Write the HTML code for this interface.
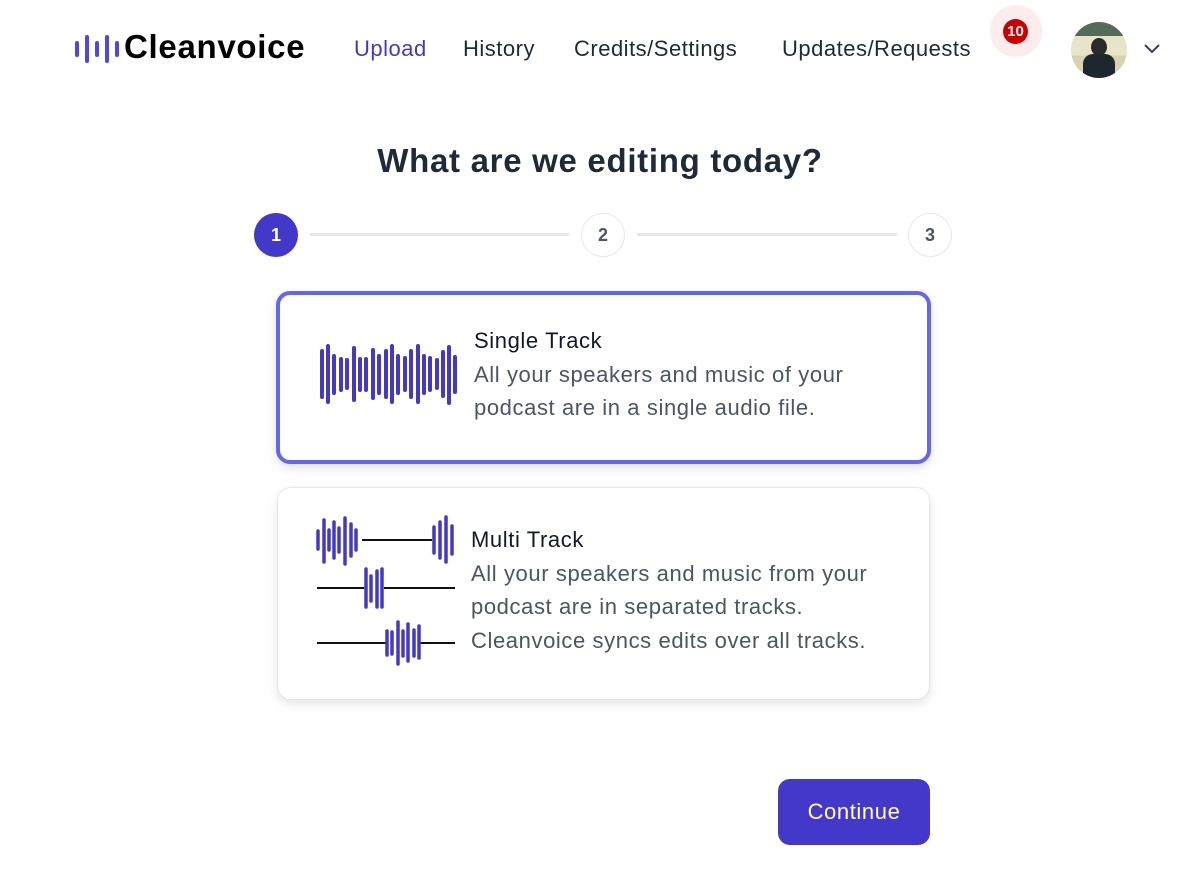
<!DOCTYPE html>
<html><head><meta charset="utf-8"><style>
*{box-sizing:border-box;margin:0;padding:0}
body{width:1200px;height:880px;background:#fff;font-family:"Liberation Sans",sans-serif;position:relative;overflow:hidden;color:#111827}
.abs{position:absolute}
.nav a{position:absolute;top:36px;font-size:22px;letter-spacing:0.5px;color:#1f2937;text-decoration:none;white-space:nowrap}
.circ{position:absolute;width:44px;height:44px;border-radius:50%;top:213px;font-size:18px;font-weight:bold;display:flex;align-items:center;justify-content:center}
.card{position:absolute;background:#fff;border-radius:14px}
.t{position:absolute;font-size:22px;letter-spacing:0.6px;line-height:33.5px;color:#4b5563;white-space:nowrap}
.t b{font-weight:normal;color:#111827;display:block}
</style></head><body>
<svg class="abs" style="left:74px;top:34px" width="46" height="30"><g stroke="#4f46e5" stroke-width="4" stroke-linecap="round"><line x1="3" y1="9" x2="3" y2="21"/><line x1="13" y1="3" x2="13" y2="27"/><line x1="23" y1="9" x2="23" y2="21"/><line x1="33" y1="3" x2="33" y2="27"/><line x1="43" y1="9" x2="43" y2="21"/></g></svg>
<div class="abs" style="left:124px;top:28px;font-size:33px;font-weight:bold;color:#000;letter-spacing:0.7px">Cleanvoice</div>
<div class="nav">
<a style="left:354px;color:#4338ca">Upload</a>
<a style="left:463px">History</a>
<a style="left:574px">Credits/Settings</a>
<a style="left:782px">Updates/Requests</a>
</div>
<div class="abs" style="left:990px;top:5px;width:52px;height:52px;border-radius:50%;background:#fdecec"></div>
<div class="abs" style="left:1003px;top:19px;width:25px;height:25px;border-radius:50%;background:#c00;color:#fff;font-size:15px;font-weight:bold;display:flex;align-items:center;justify-content:center">10</div>
<div class="abs" style="left:1071px;top:22px;width:56px;height:56px;border-radius:50%;background:linear-gradient(180deg,#556b5a 0 25%,#e8e4c8 25% 60%,#d8d2b0 60%);overflow:hidden"><div style="position:absolute;left:20px;top:16px;width:16px;height:18px;border-radius:50%;background:#2a2a2a"></div><div style="position:absolute;left:12px;top:32px;width:32px;height:26px;border-radius:10px 10px 0 0;background:#1e2630"></div></div>
<svg class="abs" style="left:1143px;top:43px" width="18" height="12"><path d="M2 2 L9 9 L16 2" fill="none" stroke="#374151" stroke-width="2"/></svg>
<div class="abs" style="left:0;width:1200px;top:142px;text-align:center;font-size:33px;font-weight:bold;letter-spacing:0.7px;color:#1f2937">What are we editing today?</div>
<div class="abs" style="left:310px;top:233px;width:259px;height:3px;background:#e5e7eb"></div>
<div class="abs" style="left:637px;top:233px;width:260px;height:3px;background:#e5e7eb"></div>
<div class="circ" style="left:254px;background:#4338ca;color:#fff">1</div>
<div class="circ" style="left:581px;border:1.5px solid #e5e7eb;color:#4b5563">2</div>
<div class="circ" style="left:908px;border:1.5px solid #e5e7eb;color:#4b5563">3</div>
<div class="card" style="left:276px;top:291px;width:655px;height:173px;border:4px solid #6366f1;box-shadow:0 4px 10px rgba(0,0,0,.12)"></div>
<div class="t" style="left:474px;top:324px"><b>Single Track</b>All your speakers and music of your<br>podcast are in a single audio file.</div>
<div class="card" style="left:277px;top:487px;width:653px;height:213px;border:1px solid #e5e7eb;box-shadow:0 4px 10px rgba(0,0,0,.10)"></div>
<svg class="abs" style="left:0;top:0" width="1200" height="880">
<g stroke="#111" stroke-width="2"><line x1="362" y1="540" x2="432" y2="540"/><line x1="317" y1="588" x2="364" y2="588"/><line x1="384" y1="588" x2="455" y2="588"/><line x1="317" y1="643" x2="386" y2="643"/><line x1="420" y1="643" x2="455" y2="643"/></g>
<g stroke="#4338ca" stroke-width="3.5" stroke-linecap="round">
<line x1="318" y1="531" x2="318" y2="549"/><line x1="324" y1="520" x2="324" y2="562"/><line x1="329" y1="530" x2="329" y2="550"/><line x1="334" y1="522" x2="334" y2="558"/><line x1="339" y1="528" x2="339" y2="552"/><line x1="345" y1="518" x2="345" y2="564"/><line x1="351" y1="524" x2="351" y2="556"/><line x1="356" y1="530" x2="356" y2="550"/>
<line x1="434" y1="527" x2="434" y2="553"/><line x1="440" y1="522" x2="440" y2="558"/><line x1="446" y1="517" x2="446" y2="562"/><line x1="452" y1="526" x2="452" y2="554"/>
<line x1="366" y1="569" x2="366" y2="607"/><line x1="371" y1="576" x2="371" y2="601"/><line x1="377" y1="571" x2="377" y2="607"/><line x1="382" y1="569" x2="382" y2="607"/>
<line x1="387" y1="631" x2="387" y2="655"/><line x1="392" y1="632" x2="392" y2="654"/><line x1="398" y1="622" x2="398" y2="664"/><line x1="403" y1="631" x2="403" y2="656"/><line x1="408" y1="624" x2="408" y2="661"/><line x1="414" y1="630" x2="414" y2="656"/><line x1="419" y1="626" x2="419" y2="658"/>
</g>
<g stroke="#4338ca" stroke-width="4" stroke-linecap="round">
<line x1="322" y1="351" x2="322" y2="397"/><line x1="328" y1="346" x2="328" y2="402"/><line x1="334" y1="356" x2="334" y2="393"/><line x1="341" y1="359" x2="341" y2="390"/><line x1="347" y1="360" x2="347" y2="388"/><line x1="354" y1="348" x2="354" y2="400"/><line x1="360" y1="359" x2="360" y2="390"/><line x1="366" y1="359" x2="366" y2="390"/><line x1="373" y1="350" x2="373" y2="398"/><line x1="379" y1="356" x2="379" y2="393"/><line x1="386" y1="351" x2="386" y2="397"/><line x1="392" y1="346" x2="392" y2="402"/><line x1="398" y1="356" x2="398" y2="393"/><line x1="405" y1="358" x2="405" y2="390"/><line x1="411" y1="351" x2="411" y2="397"/><line x1="418" y1="346" x2="418" y2="402"/><line x1="424" y1="356" x2="424" y2="393"/><line x1="430" y1="358" x2="430" y2="390"/><line x1="437" y1="360" x2="437" y2="388"/><line x1="443" y1="352" x2="443" y2="396"/><line x1="449" y1="347" x2="449" y2="403"/><line x1="455" y1="357" x2="455" y2="392"/>
</g></svg>
<div class="t" style="left:471px;top:523px"><b>Multi Track</b>All your speakers and music from your<br>podcast are in separated tracks.<br>Cleanvoice syncs edits over all tracks.</div>
<div class="abs" style="left:778px;top:779px;width:152px;height:66px;border-radius:12px;background:#4338ca;color:#fff;font-size:22px;letter-spacing:0.6px;display:flex;align-items:center;justify-content:center">Continue</div>
</body></html>
